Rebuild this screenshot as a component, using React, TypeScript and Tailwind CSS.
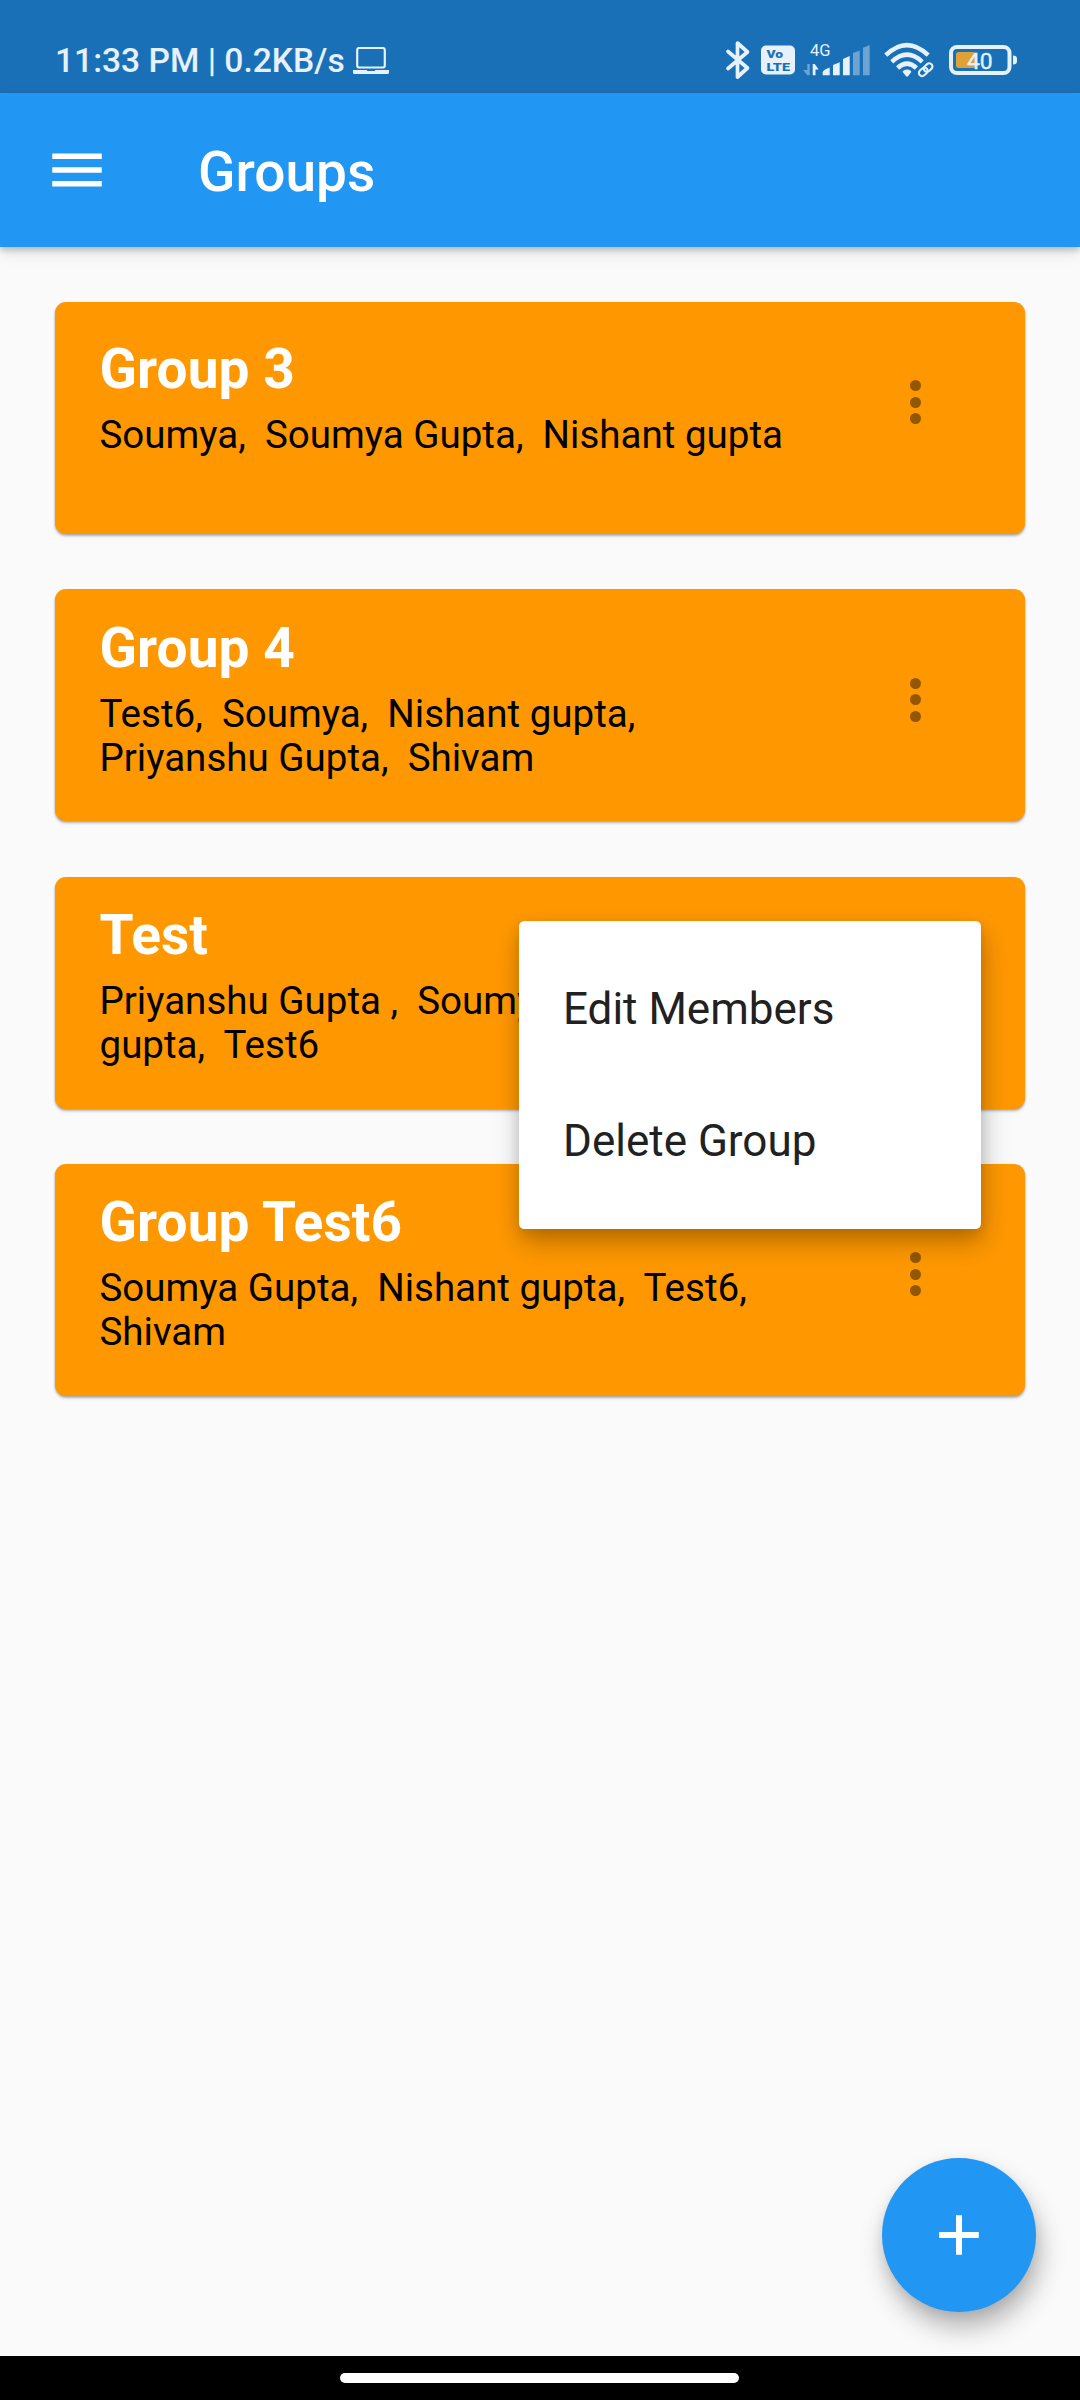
import type { ReactNode } from "react";

const ICON = "#e6f1fb";

type Group = { name: string; lines: string[] };

const groups: Group[] = [
  { name: "Group 3", lines: ["Soumya,  Soumya Gupta,  Nishant gupta"] },
  { name: "Group 4", lines: ["Test6,  Soumya,  Nishant gupta,", "Priyanshu Gupta,  Shivam"] },
  { name: "Test", lines: ["Priyanshu Gupta ,  Soumya,  Nishant", "gupta,  Test6"] },
  { name: "Group Test6", lines: ["Soumya Gupta,  Nishant gupta,  Test6,", "Shivam"] },
];

function LaptopIcon() {
  return (
    <svg className="ml-[8px] h-[27px] w-[36px]" viewBox="0 0 36 27" fill="none">
      <rect x="4.2" y="1" width="27.6" height="19.5" rx="2" stroke={ICON} strokeWidth="2.2" />
      <path d="M0 23h13.5l1 1h7l1-1H36v2.5q0 1.5-1.5 1.5h-33Q0 27 0 25.5z" fill={ICON} />
    </svg>
  );
}

function BluetoothIcon() {
  return (
    <svg className="h-[40px] w-[26px]" viewBox="0 0 26 40" fill="none">
      <path
        d="M3 11.5 22.5 28 12.5 37V3L22.5 12 3 28.5"
        stroke={ICON}
        strokeWidth="3.7"
        strokeLinecap="round"
        strokeLinejoin="round"
      />
    </svg>
  );
}

function VolteIcon() {
  return (
    <svg
      className="ml-[10px] h-[30px] w-[34px]"
      viewBox="0 0 34 30"
      fontFamily="Roboto, sans-serif"
      fontWeight="900"
      fontSize="11.5"
      fill="#1a70b7"
    >
      <rect y="0.5" width="34" height="29" rx="5" fill={ICON} />
      <text x="5.5" y="13" textLength="16.5" lengthAdjust="spacingAndGlyphs">Vo</text>
      <text x="5.5" y="26" textLength="23.5" lengthAdjust="spacingAndGlyphs">LTE</text>
    </svg>
  );
}

function SignalIcon() {
  return (
    <svg className="ml-[8px] h-[34px] w-[68px]" viewBox="0 0 68 34">
      <text x="7" y="12.5" fontSize="16.5" fill={ICON} fontFamily="Roboto, sans-serif">4G</text>
      <g fill={ICON}>
        <path d="M4.300 21h2.500v11.300H4.300L0.300 27h4z" opacity="0.4" />
        <path d="M9.700 21h2l4 5.500h-3.200v5.800H9.700z" />
        <path d="M19.700 32.300v-2.800q0-2.500 7-5v7.800z" />
        <path d="M30 32.300V22l6.700-2.700v13z" />
        <path d="M40 32.300V16l6.700-3v19.300z" />
        <path d="M50 32.300V10l6.700-2.500v24.800z" opacity="0.4" />
        <path d="M60 32.300V4.700l6.700-2.700v30.300z" opacity="0.4" />
      </g>
    </svg>
  );
}

function WifiIcon() {
  return (
    <svg className="ml-[13px] h-[36px] w-[52px]" viewBox="0 0 52 36" fill="none">
      <g stroke={ICON} strokeWidth="4.5">
        <path d="M1.800 13.200q21-20.200 42.400 0" />
        <path d="M7.800 19.800q15.200-14.400 30.400 0" />
        <path d="M13.600 26q9.400-8.600 18.800 0" />
      </g>
      <path
        d="M20 29.800q3-2 6 0l-3 3.600z"
        fill={ICON}
        stroke={ICON}
        strokeWidth="2.500"
        strokeLinejoin="round"
      />
      <g transform="translate(41.700 27.700) rotate(-42)">
        <rect x="-10" y="-5" width="20" height="10" rx="5" fill="#1a70b7" />
        <g stroke={ICON} strokeWidth="2.100">
          <rect x="-8" y="-3.200" width="9.500" height="6.400" rx="3.200" />
          <rect x="-1.500" y="-3.200" width="9.500" height="6.400" rx="3.200" />
        </g>
      </g>
    </svg>
  );
}

function BatteryIcon() {
  return (
    <svg className="ml-[13px] h-[30px] w-[69px]" viewBox="0 0 69 30" fill="none">
      <rect x="2" y="2" width="58.5" height="26" rx="6" stroke={ICON} strokeWidth="4" />
      <rect x="7" y="7" width="19.5" height="16" rx="2.5" fill="#dda136" />
      <path d="M64 10.500q4 0 4 3v3q0 3-4 3z" fill={ICON} />
      <text
        x="18"
        y="23.7"
        fontSize="22.8"
        fill={ICON}
        stroke={ICON}
        strokeWidth="0.4"
        fontFamily="Roboto, sans-serif"
      >
        40
      </text>
    </svg>
  );
}

function StatusBar() {
  return (
    <div className="flex h-[93px] justify-between bg-[#1a70b7] pr-[62px] pl-[55px]">
      <div className="flex items-center pt-[28px]">
        <span className="text-[33.6px] leading-[40px] font-medium whitespace-pre text-[#e6f1fb]">
          11:33 PM | 0.2KB/s
        </span>
        <LaptopIcon />
      </div>
      <div className="flex items-center pt-[27px]">
        <BluetoothIcon />
        <VolteIcon />
        <SignalIcon />
        <WifiIcon />
        <BatteryIcon />
      </div>
    </div>
  );
}

function AppBar() {
  return (
    <header className="relative flex h-[154px] items-center bg-[#2196f3] pl-[44px] text-white shadow-[0_3px_6px_rgba(0,0,0,0.2),0_6px_14px_rgba(0,0,0,0.1)]">
      <svg className="h-[66px] w-[66px]" viewBox="0 0 24 24" fill="currentColor">
        <path d="M3 18h18v-2H3v2zm0-5h18v-2H3v2zm0-7v2h18V6H3z" />
      </svg>
      <h1 className="ml-[88px] pt-[4px] text-[55px] leading-[64px] font-medium">Groups</h1>
    </header>
  );
}

function MoreButton({ raised }: { raised: boolean }) {
  return (
    <button className={`${raised ? "mt-[78px]" : "mt-[88.5px]"} flex h-[44px] flex-col items-center gap-[5.5px]`}>
      <span className="size-[11px] rounded-full bg-[#925700]" />
      <span className="size-[11px] rounded-full bg-[#925700]" />
      <span className="size-[11px] rounded-full bg-[#925700]" />
    </button>
  );
}

function GroupCard({ group, children }: { group: Group; children?: ReactNode }) {
  const single = group.lines.length === 1;
  return (
    <section className="relative flex h-[232px] justify-between rounded-[11px] bg-[#ff9800] pr-[104px] pl-[44.5px] shadow-[0_2px_3px_rgba(0,0,0,0.26),0_1px_2px_rgba(0,0,0,0.14)]">
      <div className={single ? "pt-[35px]" : "pt-[26.5px]"}>
        <h2 className="text-[55px] leading-[64px] font-bold tracking-[0.1px] text-white">{group.name}</h2>
        <p className="mt-[12px] text-[38.5px] leading-[44px] tracking-[0.01px] whitespace-pre text-black">
          {group.lines.join("\n")}
        </p>
      </div>
      <MoreButton raised={single} />
      {children}
    </section>
  );
}

function PopupMenu() {
  return (
    <div className="absolute top-[44px] right-[44px] z-10 flex h-[308px] w-[462px] flex-col rounded-[5.5px] bg-white py-[22px] text-[44px] text-[#212121] shadow-[2px_14px_28px_rgba(0,0,0,0.24),0_5px_14px_rgba(0,0,0,0.12)]">
      <div className="flex h-[132px] items-center pl-[44px]">Edit Members</div>
      <div className="flex h-[132px] items-center pl-[44px]">Delete Group</div>
    </div>
  );
}

export default function App() {
  return (
    <div className="flex h-[2400px] w-[1080px] flex-col overflow-hidden bg-[#fafafa] font-['Roboto',sans-serif]">
      <StatusBar />
      <AppBar />
      <main className="relative flex flex-1 flex-col gap-[55.33px] px-[55px] pt-[55px]">
        {groups.map((g) => (
          <div key={g.name} className={g.name === "Test" ? "relative z-10" : "relative"}>
            <GroupCard group={g}>{g.name === "Test" && <PopupMenu />}</GroupCard>
          </div>
        ))}
        <button className="absolute right-[44px] bottom-[44px] flex size-[154px] items-center justify-center rounded-full bg-[#2196f3] text-white shadow-[4px_16px_26px_rgba(0,0,0,0.28),0_4px_12px_rgba(0,0,0,0.08)]">
          <svg className="size-[66px]" viewBox="0 0 66 66" fill="currentColor">
            <path d="M30 13.200h6v16.800h16.800v6H36v16.800h-6V36H13.200v-6H30z" />
          </svg>
        </button>
      </main>
      <nav className="flex h-[44px] items-center justify-center bg-black pr-px">
        <div className="h-[10px] w-[399px] rounded-full bg-white" />
      </nav>
    </div>
  );
}
